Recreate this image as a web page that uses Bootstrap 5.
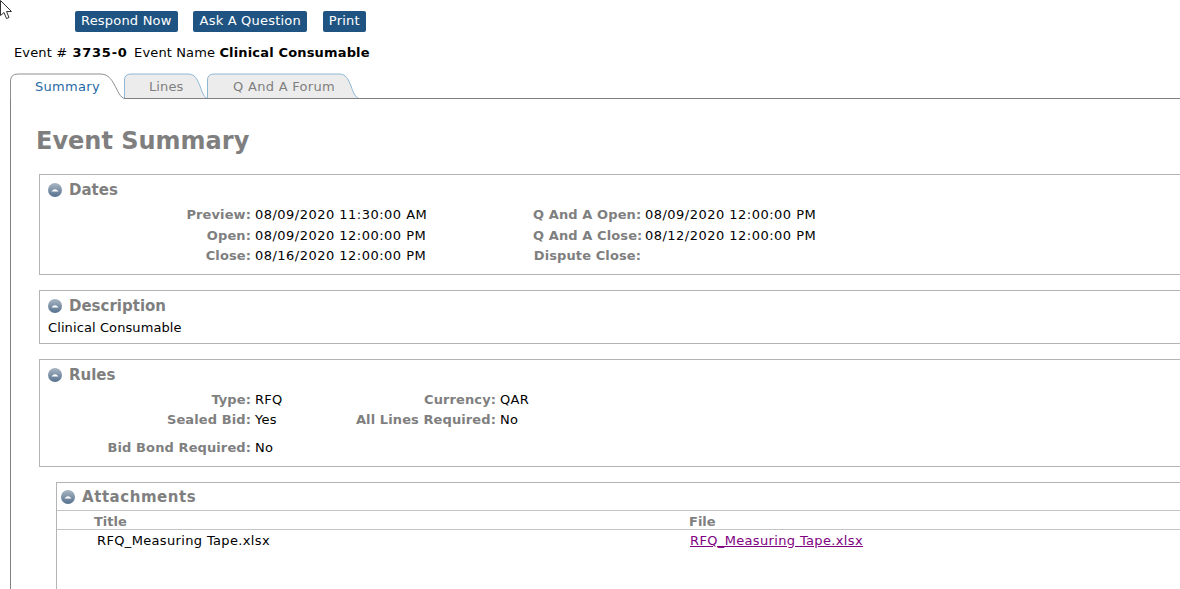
<!DOCTYPE html>
<html lang="en"><head><meta charset="utf-8"><title>Event Summary</title>
<link href="https://cdn.jsdelivr.net/npm/bootstrap@5.3.0/dist/css/bootstrap.min.css" rel="stylesheet">
<style>
html,body{height:589px;overflow:hidden;background:#fff}
body{font-family:"DejaVu Sans",Verdana,sans-serif;font-size:13px;line-height:16px;color:#000;position:relative}
.cursor-ic{position:absolute;left:0;top:0}
.act-bar{padding:11px 0 0 75px;gap:15px;display:flex}
.act-btn{background:#1f5482;color:#fff;border:0;border-radius:2px;font-size:13px;line-height:16px;padding:2px 6px 3px;height:21px;letter-spacing:.2px}
.act-btn+.act-btn{padding-left:7px}
.act-btn+.act-btn+.act-btn{margin-left:1px;padding-left:6px}
.evt-line{margin:13px 0 0 14px;height:16px;white-space:pre;letter-spacing:.13px}
.evt-line b{letter-spacing:.16px}
.evt-line .evt-num{letter-spacing:.75px;margin:0 -2px 0 1px}
.tabs-row{margin:12px 0 0 10px;height:26px;display:flex;position:relative}
.tab-it{position:relative;height:26px;display:flex;align-items:center;color:#7f7f7f;font-size:13px;padding-top:2px;letter-spacing:.3px}
.tab-it svg{position:absolute;left:0;top:0;width:100%;height:26px}
.tab-it span{position:relative;white-space:nowrap}
.tab-a{width:115px;color:#1f6aa5;padding-left:25px}
.tab-b{width:83px;margin-left:-1px;padding-left:25px;letter-spacing:.1px}
.tab-c{width:153px;padding-left:26px}
.tab-line{flex:1;border-bottom:1px solid #808080;height:26px}
.main-pane{margin-left:10px;border-left:1px solid #808080;padding:0 0 0 25px;height:490px}
.pg-title{font-size:24px;line-height:30px;font-weight:700;color:#7f7f7f;margin:0;padding-top:27px;height:75px}
.sec-box{border:1px solid #b4b4b4;border-right:0;margin-left:3px;padding-left:8px}
.sec-head{display:flex;align-items:center;gap:7px;height:28px;padding-top:2px;font-size:15px;font-weight:700;color:#7f7f7f}
.sec-head svg{flex:none}
.box-dates{height:101px;margin-bottom:15px}
.box-desc{height:54px;margin-bottom:15px}
.box-rules{height:108px;margin-bottom:15px}
.box-att{margin-left:20px;padding:0;height:107px;border-bottom:0}
.box-att .sec-head{padding:0 0 0 4px;height:28px;border-bottom:1px solid #c4c4c4}
.att-name{letter-spacing:.55px}
.fld-grid{display:grid;margin-top:2px;line-height:20.5px;white-space:nowrap}
.dates-grid{grid-template-columns:203px 4px 278px 108px 4px 200px;letter-spacing:.48px}
.rules-grid{grid-template-columns:203px 4px 64px 177px 4px 100px;line-height:20px;letter-spacing:.3px}
.lbl{font-weight:700;color:#7f7f7f;text-align:right;letter-spacing:.1px}
.gap-row{height:8px;grid-column:1/-1}
.desc-txt{margin-top:1px;letter-spacing:.1px}
.att-cols{display:grid;grid-template-columns:595px 1fr;font-weight:700;color:#7f7f7f;height:19px;line-height:21px;border-bottom:1px solid #c4c4c4;padding-left:37px}
.att-row{display:grid;grid-template-columns:593px 1fr;padding:2px 0 0 40px;line-height:17px;letter-spacing:.35px}
.att-row a{color:#800080}
</style></head><body>
<svg class="cursor-ic" width="13" height="20" viewBox="0 0 13 20"><path d="M.5.5v15l3.500-3 2.500 6 2.500-1-2.500-6h5z" fill="#fff" stroke="#333"/></svg>
<div class="act-bar">
<button class="act-btn">Respond Now</button><button class="act-btn">Ask A Question</button><button class="act-btn">Print</button>
</div>
<div class="evt-line">Event # <b class="evt-num">3735-0</b>  Event Name <b>Clinical Consumable</b></div>
<div class="tabs-row">
<div class="tab-a tab-it"><svg viewBox="0 0 115 26"><path d="M.5 26V8Q.5 1 8 1H90C98 1 101 6 104 11C108 18 110 25 115 25.5" fill="#fff" stroke="#909090"/></svg><span>Summary</span></div>
<div class="tab-b tab-it"><svg viewBox="0 0 83 26"><path d="M.5 25V7Q.5 1 7 1H64C71 1 73 6 76 13C78 19 80 24 83 25.5H.5z" fill="#ececec" stroke="#8db8d4"/><path d="M0 25.500H83" stroke="#808080"/></svg><span>Lines</span></div>
<div class="tab-c tab-it"><svg viewBox="0 0 153 26"><path d="M.5 25V7Q.5 1 7 1H132C139 1 141 6 144 13C146 19 148 24 152 25.5H.5z" fill="#ececec" stroke="#8db8d4"/><path d="M0 25.500H153" stroke="#808080"/></svg><span>Q And A Forum</span></div>
<div class="tab-line"></div>
</div>
<div class="main-pane">
<h1 class="pg-title">Event Summary</h1>
<section class="sec-box box-dates">
<div class="sec-head"><svg width="14" height="14" viewBox="0 0 14 14"><use href="#tog"/></svg>Dates</div>
<div class="fld-grid dates-grid">
<div class="lbl">Preview:</div><div></div><div>08/09/2020 11:30:00 AM</div><div class="lbl">Q And A Open:</div><div></div><div>08/09/2020 12:00:00 PM</div>
<div class="lbl">Open:</div><div></div><div>08/09/2020 12:00:00 PM</div><div class="lbl">Q And A Close:</div><div></div><div>08/12/2020 12:00:00 PM</div>
<div class="lbl">Close:</div><div></div><div>08/16/2020 12:00:00 PM</div><div class="lbl">Dispute Close:</div><div></div><div></div>
</div>
</section>
<section class="sec-box box-desc">
<div class="sec-head"><svg width="14" height="14" viewBox="0 0 14 14"><use href="#tog"/></svg>Description</div>
<div class="desc-txt">Clinical Consumable</div>
</section>
<section class="sec-box box-rules">
<div class="sec-head"><svg width="14" height="14" viewBox="0 0 14 14"><use href="#tog"/></svg>Rules</div>
<div class="fld-grid rules-grid">
<div class="lbl">Type:</div><div></div><div>RFQ</div><div class="lbl">Currency:</div><div></div><div>QAR</div>
<div class="lbl">Sealed Bid:</div><div></div><div>Yes</div><div class="lbl">All Lines Required:</div><div></div><div>No</div>
<div class="gap-row"></div>
<div class="lbl">Bid Bond Required:</div><div></div><div>No</div>
</div>
</section>
<section class="sec-box box-att">
<div class="sec-head"><svg width="14" height="14" viewBox="0 0 14 14"><use href="#tog"/></svg><span class="att-name">Attachments</span></div>
<div class="att-cols"><div>Title</div><div>File</div></div>
<div class="att-row"><div>RFQ_Measuring Tape.xlsx</div><div><a href="#">RFQ_Measuring Tape.xlsx</a></div></div>
</section>
</div>
<svg width="0" height="0" class="position-absolute"><defs>
<linearGradient id="gr" x1="0" y1="0" x2="0" y2="1"><stop offset="0" stop-color="#a9b6c4"/><stop offset=".5" stop-color="#7f93a8"/><stop offset="1" stop-color="#55718f"/></linearGradient>
<g id="tog"><circle cx="7" cy="7" r="7" fill="url(#gr)"/><path d="M3.500 8.500Q7 4 10.500 8.500z" fill="#fff"/></g>
</defs></svg>
<script src="https://cdn.jsdelivr.net/npm/bootstrap@5.3.0/dist/js/bootstrap.bundle.min.js"></script>
</body></html>
